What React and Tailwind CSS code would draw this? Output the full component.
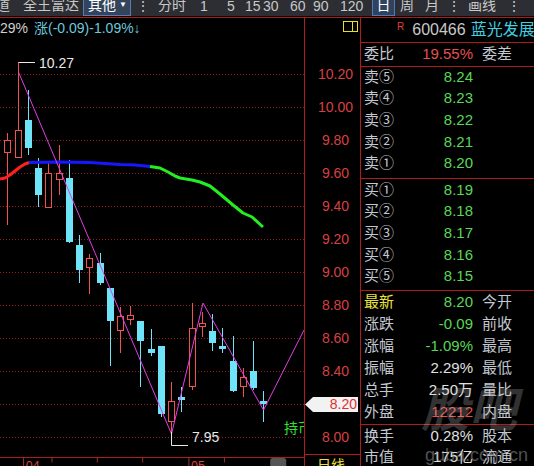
import React from "react";

// K-line candles: [centerX, wickTop, bodyTop, bodyBottom, wickBottom, type]
// type "r" = hollow red (up), "c" = filled cyan (down)
const candles = [
  [7.5, 133, 140, 153, 225, "r"],
  [18.5, 62, 130, 158, 158, "r"],
  [28.5, 90, 120, 148, 155, "c"],
  [38.5, 158, 168, 195, 207, "c"],
  [48.5, 163, 173, 208, 208, "r"],
  [59.5, 145, 173, 180, 195, "r"],
  [69.5, 160, 178, 242, 243, "c"],
  [79.5, 235, 245, 270, 283, "c"],
  [89.5, 254, 258, 268, 294, "r"],
  [100.5, 253, 263, 283, 285, "c"],
  [110.5, 288, 288, 321, 366, "c"],
  [120.5, 307, 316, 331, 353, "r"],
  [130.5, 306, 315, 320, 325, "r"],
  [140.5, 321, 321, 341, 387, "c"],
  [151.5, 329, 349, 353, 356, "c"],
  [161.5, 346, 346, 414, 417, "c"],
  [171.5, 382, 401, 422, 443, "r"],
  [181.5, 387, 397, 400, 412, "c"],
  [192.5, 303, 328, 387, 390, "r"],
  [202.5, 312, 323, 327, 337, "r"],
  [212.5, 314, 331, 343, 351, "c"],
  [222.5, 328, 346, 349, 353, "c"],
  [233.5, 336, 361, 391, 392, "c"],
  [243.5, 368, 377, 387, 397, "r"],
  [253.5, 341, 371, 388, 390, "c"],
  [263.5, 391, 401, 404, 422, "c"],
];

const gridYs = [74, 107, 140, 173, 206, 239, 272, 305, 338, 371, 404, 437];
const axisLabels = ["10.20", "10.00", "9.80", "9.60", "9.40", "9.20", "9.00", "8.80", "8.60", "8.40", "8.20", "8.00"];

const RED = "#f05252";
const CYAN = "#6fe3f7";

function Candle({ c }) {
  const [x, wt, bt, bb, wb, t] = c;
  if (t === "c") {
    return (
      <g>
        <line x1={x} x2={x} y1={wt} y2={wb} stroke={CYAN} strokeWidth="1" />
        <rect x={x - 3.5} y={bt} width="7" height={Math.max(bb - bt, 2)} fill={CYAN} />
      </g>
    );
  }
  return (
    <g>
      {wt < bt && <line x1={x} x2={x} y1={wt} y2={bt} stroke={RED} strokeWidth="1" />}
      {wb > bb && <line x1={x} x2={x} y1={bb} y2={wb} stroke={RED} strokeWidth="1" />}
      <rect x={x - 3} y={bt + 0.5} width="6" height={bb - bt - 1} fill="black" stroke={RED} strokeWidth="1" />
    </g>
  );
}

function Chart() {
  return (
    <svg width="304" height="419" viewBox="0 38 304 419" className="block">
      {gridYs.map((y) => (
        <line key={y} x1="0" x2="304" y1={y + 0.5} y2={y + 0.5} stroke="#951c1c" strokeWidth="1" strokeDasharray="1 2" />
      ))}
      {candles.map((c, i) => (
        <Candle key={i} c={c} />
      ))}
      {/* moving average */}
      <polyline
        points="0,179 5,178 10,175 15,171 20,167 25,164 29,162.5"
        fill="none" stroke="#ff2020" strokeWidth="3" strokeLinejoin="round"
      />
      <polyline
        points="29,162.5 60,162 90,162.5 120,164.5 135,165 150,166.5"
        fill="none" stroke="#1616ff" strokeWidth="3" strokeLinejoin="round"
      />
      <polyline
        points="150,166.5 160,168 168,172 175,176 180,178 192,180 200,182 210,186 220,194 233,205 243,213 252,217 263,227"
        fill="none" stroke="#22ee22" strokeWidth="3" strokeLinejoin="round"
      />
      {/* zigzag */}
      <polyline
        points="18.5,72 171.5,434 203,303 263.5,410 304,330"
        fill="none" stroke="#e23ee2" strokeWidth="1"
      />
      {/* high / low marks */}
      <polyline points="18.5,62.5 35,62.5" fill="none" stroke="#e8e8e8" strokeWidth="1" />
      <text x="39" y="68" fill="#e8e8e8" fontSize="14" fontFamily="Liberation Sans, sans-serif">10.27</text>
      <polyline points="171.5,432 171.5,445.5 188,445.5" fill="none" stroke="#e8e8e8" strokeWidth="1" />
      <text x="192" y="442" fill="#e8e8e8" fontSize="14" fontFamily="Liberation Sans, sans-serif">7.95</text>
      <text x="284" y="433" fill="#33e033" fontSize="14" fontFamily="Noto Sans CJK SC, sans-serif">持币</text>
    </svg>
  );
}

function DateStrip() {
  return (
    <svg width="304" height="9" viewBox="0 458 304 9" className="block">
      <line x1="7.5" x2="7.5" y1="458" y2="467" stroke="#c23030" />
      <line x1="193.5" x2="193.5" y1="458" y2="467" stroke="#c23030" />
      {[39.5, 90.5, 141.5, 233.5].map((x) => (
        <line key={x} x1={x} x2={x} y1="458" y2="463" stroke="#c23030" />
      ))}
      <text x="10" y="471" fill="#d84040" fontSize="14" fontFamily="Liberation Sans, sans-serif">04</text>
      <text x="196" y="471" fill="#d84040" fontSize="14" fontFamily="Liberation Sans, sans-serif">05</text>
      <rect x="285" y="458" width="18" height="12" rx="3" fill="#555555" />
    </svg>
  );
}

function Row({ label, value, right, labelColor = "text-[#c3c8d0]", valueColor = "text-[#58d858]", h = "h-[21.7px]" }) {
  return (
    <div className={`flex items-center ${h} whitespace-nowrap`}>
      <span className={`w-[50px] pl-[3px] ${labelColor}`}>{label}</span>
      <span className={`w-[62px] text-right ${valueColor}`}>{value}</span>
      {right && <span className="ml-[9px] text-[#c3c8d0]">{right}</span>}
    </div>
  );
}

function Toolbar() {
  return (
    <div className="h-[17px] bg-[#2c2e33] border-b border-black flex items-start text-[14px] leading-[14px] text-[#c8c8c8] overflow-hidden whitespace-nowrap">
      <span className="-ml-[4px] w-[27px] shrink-0 -mt-[2px]">道</span>
      <span className="w-[60px] shrink-0 -mt-[2px]">全王富达</span>
      <span className="w-[48px] h-[16px] shrink-0 border border-t-0 border-[#5b7cb3] bg-[#34445c] flex items-start pl-[4px] text-white">
        <span className="-mt-[2px]">其他</span>
        <span className="ml-auto mr-[3px] text-[8px] leading-[10px]">▼</span>
      </span>
      <span className="w-[24px] shrink-0 text-center -mt-[1px]">⋮</span>
      <span className="w-[45px] pl-[3px] shrink-0 -mt-[2px]">分时</span>
      <span className="w-[27px] shrink-0 -mt-[1px]">1</span>
      <span className="w-[18px] shrink-0 -mt-[1px]">5</span>
      <span className="w-[18px] shrink-0 -mt-[1px]">15</span>
      <span className="w-[27px] shrink-0 -mt-[1px]">30</span>
      <span className="w-[23px] shrink-0 -mt-[1px]">60</span>
      <span className="w-[27px] shrink-0 -mt-[1px]">90</span>
      <span className="w-[32px] shrink-0 -mt-[1px]">120</span>
      <span className="w-[23px] h-[16px] shrink-0 border border-t-0 border-[#4f79b8] bg-[#2f425e] text-center text-white">
        <span className="relative -top-[2px]">日</span>
      </span>
      <span className="ml-[5px] w-[25px] shrink-0 -mt-[2px]">周</span>
      <span className="w-[22px] shrink-0 -mt-[2px]">月</span>
      <span className="w-[12px] shrink-0 text-center -mt-[1px]">⋮</span>
      <span className="ml-[9px] w-[39px] shrink-0 -mt-[2px]">画线</span>
      <span className="w-[12px] shrink-0 text-center -mt-[1px]">⋮</span>
    </div>
  );
}

export default function App() {
  return (
    <div className="relative w-[534px] h-[466px] bg-black overflow-hidden font-['Liberation_Sans','Noto_Sans_CJK_SC',sans-serif]">
      <Toolbar />
      <div className="flex border-t border-[#b01c1c] h-[449px]">
        {/* chart column */}
        <div className="w-[305px] shrink-0 border-r border-[#b01c1c] flex flex-col">
          <div className="h-[440px] border-b border-[#b01c1c]">
            <div className="h-[20px] flex items-center text-[14px] whitespace-nowrap">
              <span className="text-[#d0d0d0]">29%</span>
              <span className="ml-[6px] text-[#6cc8dc]">涨(-0.09)-1.09%↓</span>
            </div>
            <Chart />
          </div>
          <DateStrip />
        </div>

        {/* price axis */}
        <div className="relative w-[56px] shrink-0 border-r border-[#b01c1c] flex flex-col">
          <div className="h-[440px] border-b border-[#b01c1c]">
            <div className="h-[20px] flex justify-end items-start pt-[3px] pr-[2px]">
              <div className="w-[15px] h-[11px] border border-[#e8e020] flex">
                <div className="w-[9px] h-full border-r border-[#e8e020]" />
              </div>
            </div>
            <div className="pt-[19.5px] pl-[6px]">
              {axisLabels.map((l) => (
                <div key={l} className="h-[33px] flex items-center justify-center text-[14px] text-[#d84040]">
                  {l}
                </div>
              ))}
            </div>
          </div>
          <div className="pl-[12px] pt-[1px] text-[14px] leading-[16px] text-[#f0e040] font-['Noto_Sans_CJK_SC',sans-serif]">日线</div>
          <div className="absolute left-0 top-[379px] w-[53px] h-[15px] bg-[#f2f2f2] [clip-path:polygon(8px_0,100%_0,100%_100%,8px_100%,0_50%)] flex items-center justify-end pr-[1px] text-[14px] text-[#e03030]">
            8.20
          </div>
        </div>

        {/* quote panel */}
        <div className="flex-1 min-w-0 flex flex-col text-[15px] overflow-hidden">
          <div className="h-[25px] shrink-0 border-b border-[#b01c1c] flex items-center pl-[36px] whitespace-nowrap">
            <span className="self-start mt-[4px] text-[10px] leading-none text-[#e04040]">R</span>
            <span className="ml-[8px] text-[16px] text-[#c8c8c8]">600466</span>
            <span className="ml-[5px] text-[16px] text-[#40d0e0]">蓝光发展</span>
          </div>
          <div className="h-[24px] shrink-0 border-b border-[#b01c1c]">
            <Row label="委比" value="19.55%" right="委差" valueColor="text-[#e65050]" h="h-[22px]" />
          </div>
          <div className="h-[112px] shrink-0 border-b border-[#b01c1c]">
            <div className="-mt-[1px]">
              <Row label="卖⑤" value="8.24" />
              <Row label="卖④" value="8.23" />
              <Row label="卖③" value="8.22" />
              <Row label="卖②" value="8.21" />
              <Row label="卖①" value="8.20" />
            </div>
          </div>
          <div className="h-[112px] shrink-0 border-b border-[#b01c1c]">
            <Row label="买①" value="8.19" />
            <Row label="买②" value="8.18" />
            <Row label="买③" value="8.17" />
            <Row label="买④" value="8.16" />
            <Row label="买⑤" value="8.15" />
          </div>
          <div className="h-[134px] shrink-0 border-b border-[#b01c1c]">
            <Row label="最新" value="8.20" right="今开" labelColor="text-[#ece23c]" h="h-[22px]" />
            <Row label="涨跌" value="-0.09" right="前收" h="h-[22px]" />
            <Row label="涨幅" value="-1.09%" right="最高" h="h-[22px]" />
            <Row label="振幅" value="2.29%" right="最低" valueColor="text-[#e0e0e0]" h="h-[22px]" />
            <Row label="总手" value="2.50万" right="量比" valueColor="text-[#e0e0e0]" h="h-[22px]" />
            <Row label="外盘" value="12212" right="内盘" valueColor="text-[#e65050]" h="h-[22px]" />
          </div>
          <div>
            <Row label="换手" value="0.28%" right="股本" valueColor="text-[#e0e0e0]" />
            <Row label="市值" value="175亿" right="流通" valueColor="text-[#e0e0e0]" />
          </div>
        </div>
      </div>

      {/* watermark */}
      <div className="absolute left-[421px] top-[382px] text-[48px] leading-none font-bold italic text-[#c8c8c8]/25 pointer-events-none font-['Noto_Sans_CJK_SC',sans-serif]">
        股吧
      </div>
      <div className="absolute left-[425px] top-[446px] text-[18px] leading-none text-[#a0a0a0]/50 pointer-events-none">
        guba.com.cn
      </div>
    </div>
  );
}
